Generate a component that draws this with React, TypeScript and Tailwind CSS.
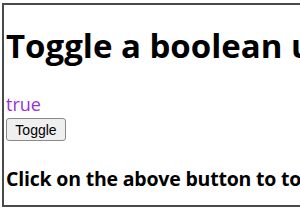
import { useState } from "react";

export default function App() {
  const [value, setValue] = useState(true);

  return (
    <div className="w-[300px] h-[210px] bg-white overflow-hidden">
      <div
        className="mt-[3px] ml-[2px] w-[340px] h-[204px] border-0 border-l-2 border-t-2 border-b-2 border-[#4a4a4a] pl-[2px] overflow-hidden"
        style={{ fontFamily: '"Open Sans", "Noto Sans", sans-serif' }}
      >
        <h1 className="mt-[21px] text-[33px] leading-[40px] font-bold text-black whitespace-nowrap">
          Toggle a boolean using React
        </h1>
        <div className="mt-[27px] text-[18px] leading-[22px] text-[#9a32d6]">
          {value ? "true" : "false"}
        </div>
        <button
          onClick={() => setValue(!value)}
          className="mt-[3px] h-[23px] w-[60px] rounded-[3px] border border-[#8a8a8a] bg-[#efefef] text-[14px] leading-[18px] text-black"
          style={{ fontFamily: '"Liberation Sans", Arial, sans-serif' }}
        >
          Toggle
        </button>
        <p className="mt-[26px] text-[19.5px] leading-[24px] font-bold text-black whitespace-nowrap tracking-[-0.2px]">
          Click on the above button to toggle the value
        </p>
      </div>
    </div>
  );
}
